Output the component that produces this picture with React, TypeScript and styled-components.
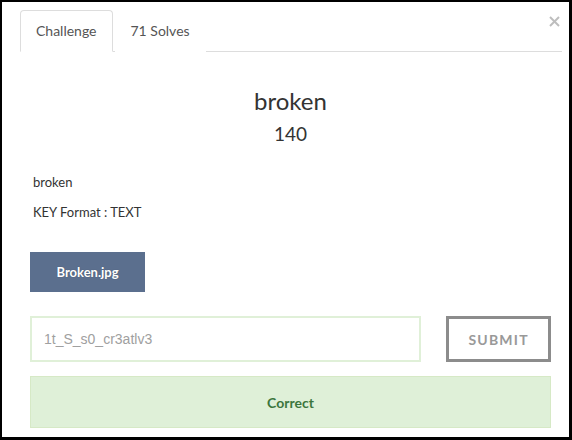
import React from 'react';
import styled, { createGlobalStyle } from 'styled-components';

const GlobalStyle = createGlobalStyle`
    html, body {
        margin: 0;
        padding: 0;
        background: #000;
    }
    * {
        box-sizing: border-box;
    }
`;

const Frame = styled.div`
    width: 572px;
    height: 440px;
    background: #fff;
    border-style: solid;
    border-color: #000;
    border-width: 2px 3px 3px 2px;
    font-family: 'Lato', 'Open Sans', sans-serif;
    color: #333;
    display: flex;
    flex-direction: column;
`;

const TabBar = styled.div`
    display: flex;
    align-items: flex-start;
    margin: 8px 7px 0 18px;
    border-bottom: 1px solid #ddd;
`;

const Tab = styled.div<{ $active?: boolean }>`
    font-size: 14px;
    line-height: 20px;
    padding: 10px 15px;
    margin-right: 2px;
    margin-bottom: -1px;
    border: 1px solid ${p => (p.$active ? '#ddd' : 'transparent')};
    border-bottom-color: ${p => (p.$active ? '#fff' : 'transparent')};
    border-radius: 4px 4px 0 0;
    background: #fff;
    color: #555;
`;

const Close = styled.svg`
    margin-left: auto;
    margin-top: 6px;
    margin-right: 2px;
    width: 11px;
    height: 11px;
    stroke: #bdbdbd;
    stroke-width: 2;
`;

const Body = styled.div`
    padding: 0 18px 0 28px;
    display: flex;
    flex-direction: column;
`;

const Header = styled.div`
    display: flex;
    flex-direction: column;
    align-items: center;
    padding-top: 34px;
`;

const Title = styled.h2`
    margin: 0;
    font-size: 24px;
    font-weight: 400;
    line-height: 30px;
    color: #333;
`;

const Points = styled.div`
    font-size: 19px;
    line-height: 24px;
    margin-top: 6px;
    color: #333;
`;

const Description = styled.div`
    margin-top: 26px;
    padding-left: 3px;
    font-size: 13px;
    color: #333;
`;

const Line = styled.p`
    margin: 0 0 10px;
    line-height: 20px;
`;

const FileButton = styled.div`
    margin-top: 20px;
    width: 115px;
    height: 40px;
    background: #5b6f8e;
    color: #fff;
    font-weight: 700;
    font-size: 13px;
    display: flex;
    align-items: center;
    justify-content: center;
    text-shadow: 0 0 1px rgba(0, 0, 0, 0.3);
`;

const SubmitRow = styled.div`
    display: flex;
    gap: 25px;
    margin-top: 24px;
`;

const KeyInput = styled.input`
    width: 392px;
    height: 46px;
    border: 2px solid #e0f0d8;
    padding: 0 12px;
    font-family: 'Liberation Sans', Arial, sans-serif;
    font-size: 14px;
    color: #555;
    outline: none;
    &::placeholder {
        color: #a0a0a0;
    }
`;

const SubmitButton = styled.button`
    width: 105px;
    height: 46px;
    border: 3px solid #8c8c8c;
    background: #fff;
    color: #999;
    font-family: 'Lato', sans-serif;
    font-weight: 700;
    font-size: 14px;
    letter-spacing: 1.2px;
    padding: 0;
`;

const Alert = styled.div`
    margin-top: 14px;
    height: 52px;
    background: #dff0d8;
    border: 1px solid #d6e9c6;
    color: #3c763d;
    font-weight: 700;
    font-size: 14px;
    display: flex;
    align-items: center;
    justify-content: center;
`;

export default function App() {
    return (
        <>
            <GlobalStyle />
            <Frame>
                <TabBar>
                    <Tab $active>Challenge</Tab>
                    <Tab>71 Solves</Tab>
                    <Close viewBox="0 0 11 11">
                        <line x1="1" y1="1" x2="10" y2="10" />
                        <line x1="10" y1="1" x2="1" y2="10" />
                    </Close>
                </TabBar>
                <Body>
                    <Header>
                        <Title>broken</Title>
                        <Points>140</Points>
                    </Header>
                    <Description>
                        <Line>broken</Line>
                        <Line>KEY Format : TEXT</Line>
                    </Description>
                    <FileButton>Broken.jpg</FileButton>
                    <SubmitRow>
                        <KeyInput placeholder="1t_S_s0_cr3atlv3" />
                        <SubmitButton>SUBMIT</SubmitButton>
                    </SubmitRow>
                    <Alert>Correct</Alert>
                </Body>
            </Frame>
        </>
    );
}
